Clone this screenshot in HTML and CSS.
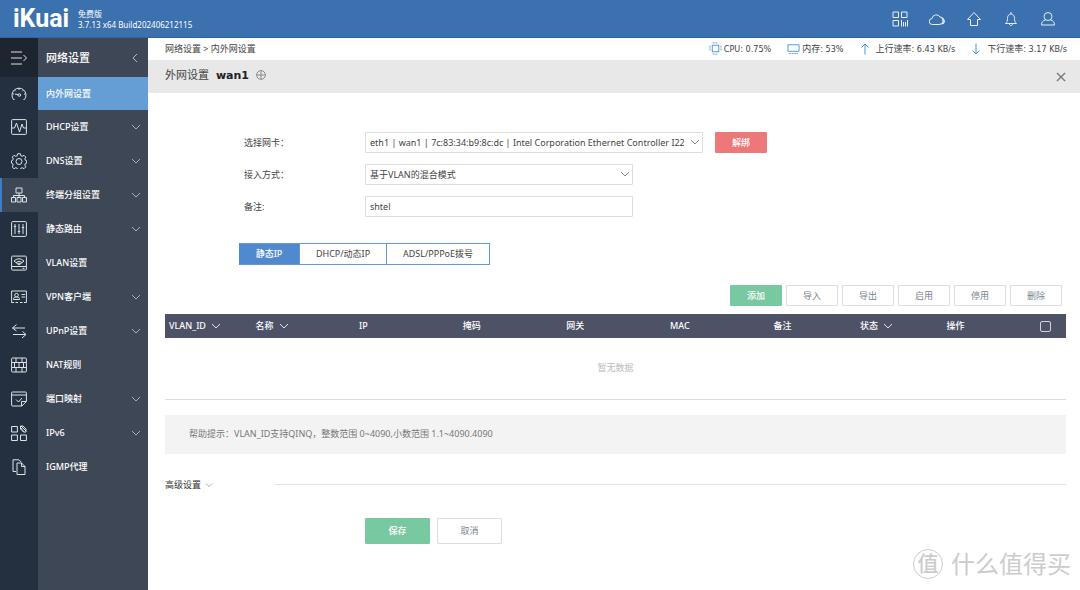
FILE: index.html
```html
<!DOCTYPE html>
<html lang="zh-CN">
<head>
<meta charset="utf-8">
<meta name="viewport" content="width=device-width, initial-scale=1">
<title>iKuai - 内外网设置</title>
<link rel="stylesheet" href="styles.css">
</head>
<body>
<svg class="defs" aria-hidden="true">
  <symbol id="down" viewBox="0 0 10 6"><path d="M1 1l4 4 4-4"/></symbol>
</svg>
<header class="header">
  <a class="logo" href="#">iKuai</a>
  <div class="version"><span>免费版</span><span>3.7.13 x64 Build202406212115</span></div>
  <nav class="tools" aria-label="工具">
    <button aria-label="应用"><svg viewBox="0 0 16 16"><path d="M1 1h5.500v5.500H1zM9.500 1H15v5.500H9.500zM1 9.500h5.500V15H1zM9.500 9v6.500M11.500 11v4.500M13.500 11v4.500M15.500 9v6.500"/></svg></button>
    <button aria-label="云"><svg viewBox="0 0 16 16"><path d="M3.500 13.500a3 3 0 0 1-.5-6 4.300 4.300 0 0 1 8-1.500 3.800 3.800 0 0 1-1 7.500zM11.500 6a3.800 3.800 0 0 1 1 7.300M13.500 7.500a3 3 0 0 1 .3 5.500"/></svg></button>
    <button aria-label="首页"><svg viewBox="0 0 16 16"><path d="M8 1.500L1.500 8.500h3V14.500h7V8.500h3z"/></svg></button>
    <button aria-label="通知"><svg viewBox="0 0 16 16"><path d="M8 1v2M2.500 12.500h11c-1.500-1.500-2-2.500-2-5C11.500 4.500 10 3 8 3S4.500 4.500 4.500 7.500c0 2.500-.5 3.500-2 5zM6.500 13c0 2 3 2 3 0"/></svg></button>
    <button aria-label="用户"><svg viewBox="0 0 16 16"><circle cx="8" cy="5.500" r="4"/><path d="M5.500 9C3 9.500 1.500 11 1.500 14h13c0-3-1.500-4.500-4-5"/></svg></button>
  </nav>
</header>
<div class="layout">
  <nav class="rail" aria-label="主菜单">
    <button class="expand" aria-label="展开"><svg viewBox="0 0 16 16"><path d="M0 2h11M0 8h11M0 14h11M12.500 5l3 3-3 3"/></svg></button>
    <button class="first" aria-label="状态"><svg viewBox="0 0 16 16"><path d="M3.500 13.500H2.500a7 7 0 1 1 11 0h-1M8 2v2M1.500 8h1.500M14.500 8H13M3.800 4.300l1 1M12.200 4.300l-1 1M4 8l3 .7"/><circle cx="8.300" cy="9" r="1.300"/></svg></button>
    <button aria-label="监控"><svg viewBox="0 0 16 16"><rect x=".6" y=".6" width="14.800" height="14.800" rx="1"/><path d="M1 9h2.500L5.500 4l3 9L11 5l1.500 4H15"/></svg></button>
    <button aria-label="系统设置"><svg viewBox="0 0 16 16"><path d="M6.700.7h2.600l.5 2 1.300.6 1.900-1 1.800 1.800-1 1.800.6 1.400 1.300.5v2.400l-1.400.5-.5 1.400 1 1.800-1.800 1.800-1.800-1-1.400.6-.5 1.300H6.700l-.5-1.300-1.400-.6-1.800 1-1.800-1.800 1-1.800-.5-1.400-1.200-.5V7.800l1.200-.5.6-1.400-1-1.800L3 2.300l1.800 1 1.400-.6z"/><circle cx="8" cy="8.500" r="3"/></svg></button>
    <button class="current" aria-label="网络设置"><svg viewBox="0 0 16 16"><path d="M5 1h6v5H5zM8 6v4.500M2.500 10.500V8.500h11v2M.5 10.500h4v4.500h-4zM6 10.500h4v4.500H6zM11.500 10.500h4v4.500h-4z"/></svg></button>
    <button aria-label="流控"><svg viewBox="0 0 16 16"><rect x=".6" y=".6" width="14.800" height="14.800" rx="1"/><path d="M4 3v10M8 3v10M12 3v10M2.800 5.500h2.400M6.800 10.500h2.400M10.800 6.500h2.400"/></svg></button>
    <button aria-label="无线"><svg viewBox="0 0 16 16"><rect x=".6" y="1.100" width="14.800" height="14" rx="1"/><path d="M1 11.500h14M3 6Q8 1.500 13 6L8 10zM5 7.500q3-2.500 6 0M6.500 8.700q1.500-1.200 3 0M11.500 13.300h2"/></svg></button>
    <button aria-label="认证"><svg viewBox="0 0 16 16"><path d="M3 13.500H.6V2h14.800v11.500H13M4.500 13.500H7M9 13.500h2.500M2.500 10.500c0-2 1-2.500 3-2.500s3 .5 3 2.500zM10.500 5.500H14M10.500 8H14"/><circle cx="5.500" cy="6.200" r="1.800"/></svg></button>
    <button aria-label="行为"><svg viewBox="0 0 16 16"><path d="M14 5H1.500l4-3.500M1.500 5l4 3M2 11.500h13l-3.500-3M15 11.500l-4 3.500"/></svg></button>
    <button aria-label="安全"><svg viewBox="0 0 16 16"><rect x=".6" y="1" width="14.800" height="14" rx="1"/><path d="M1 5.500h14M1 10.500h14M5 1v4.500M11 1v4.500M8 5.500v5M3.500 5.500v5M12.500 5.500v5M5 10.500V15M11 10.500V15"/></svg></button>
    <button aria-label="应用"><svg viewBox="0 0 16 16"><path d="M15.400 10.500V2q0-1-1-1H1.600q-1 0-1 1v12q0 1 1 1h9.300zM1 4h14M10.500 15v-4.500h4.500M5 8.500l2.500 2.500L11 7"/></svg></button>
    <button aria-label="高级应用"><svg viewBox="0 0 16 16"><path d="M.6 1.500h5.800v5.500H.6zM.6 10h5.800v5.500H.6zM9.500 10h5.900v5.500H9.500zM10 1l5 5M12 1l3 3M10 3l3 4M9.500 1v3l3 3h2.500V4l-3-3z"/></svg></button>
    <button aria-label="日志"><svg viewBox="0 0 16 16"><path d="M5 12.500H2V.8h6l2.500 2.500M6 4h4.500L14 7.500v8H6zM10.500 4v3.500H14"/></svg></button>
  </nav>
  <aside class="sidebar">
    <div class="side-title"><span>网络设置</span><button aria-label="收起"><svg viewBox="0 0 6 10"><path d="M5 1L1 5l4 4"/></svg></button></div>
    <nav class="menu" aria-label="网络设置">
      <a class="active" href="#">内外网设置</a>
      <a href="#">DHCP设置<svg class="chev"><use href="#down"/></svg></a>
      <a href="#">DNS设置<svg class="chev"><use href="#down"/></svg></a>
      <a href="#">终端分组设置<svg class="chev"><use href="#down"/></svg></a>
      <a href="#">静态路由<svg class="chev"><use href="#down"/></svg></a>
      <a href="#">VLAN设置</a>
      <a href="#">VPN客户端<svg class="chev"><use href="#down"/></svg></a>
      <a href="#">UPnP设置<svg class="chev"><use href="#down"/></svg></a>
      <a href="#">NAT规则</a>
      <a href="#">端口映射<svg class="chev"><use href="#down"/></svg></a>
      <a href="#">IPv6<svg class="chev"><use href="#down"/></svg></a>
      <a href="#">IGMP代理</a>
    </nav>
  </aside>
  <main class="main">
    <div class="topline">
      <div class="crumbs">网络设置 &gt; 内外网设置</div>
      <div class="stats">
        <span><svg class="stat-icon" viewBox="0 0 14 14"><rect x="3.500" y="3.500" width="7" height="7"/><path d="M4 1h6M4 13h6M1 4v6M13 4v6" stroke-dasharray="2 1"/></svg>CPU: 0.75%</span>
        <span><svg class="stat-icon" viewBox="0 0 14 14"><path d="M1 3h12v7H1z"/><path d="M2 12.500h10" stroke-dasharray="2 1"/></svg>内存: 53%</span>
        <span class="rate"><svg class="arrow" viewBox="0 0 10 12"><path d="M5 11.500V1M1.500 4.500L5 1l3.500 3.500"/></svg>上行速率: 6.43 KB/s</span>
        <span class="rate"><svg class="arrow" viewBox="0 0 10 12"><path d="M5 .5V11M1.500 7.500L5 11l3.500-3.500"/></svg>下行速率: 3.17 KB/s</span>
      </div>
    </div>
    <div class="titlebar">
      <h1>外网设置 <b>wan1</b></h1>
      <button class="plus" aria-label="添加网口"><svg viewBox="0 0 10 10"><circle cx="5" cy="5" r="4.400"/><path d="M5 1v8M1 5h8"/></svg></button>
      <button class="close" aria-label="关闭"><svg viewBox="0 0 10 10"><path d="M1 1l8 8M9 1L1 9"/></svg></button>
    </div>
    <form class="content">
      <div class="fields">
        <label for="nic">选择网卡：</label>
        <div class="control">
          <div class="pick wide"><select id="nic"><option>eth1 | wan1 | 7c:83:34:b9:8c:dc | Intel Corporation Ethernet Controller I22</option></select><svg class="chev"><use href="#down"/></svg></div>
          <button type="button" class="btn danger">解绑</button>
        </div>
        <label for="mode">接入方式：</label>
        <div class="pick"><select id="mode"><option>基于VLAN的混合模式</option></select><svg class="chev"><use href="#down"/></svg></div>
        <label for="note">备注:</label>
        <input class="text" id="note" type="text" value="shtel">
      </div>
      <div class="tabs" role="tablist">
        <button type="button" role="tab" aria-selected="true" class="tab static on">静态IP</button>
        <button type="button" role="tab" aria-selected="false" class="tab dhcp">DHCP/动态IP</button>
        <button type="button" role="tab" aria-selected="false" class="tab adsl">ADSL/PPPoE拨号</button>
      </div>
      <div class="actions">
        <button type="button" class="btn primary">添加</button>
        <button type="button" class="btn">导入</button>
        <button type="button" class="btn">导出</button>
        <button type="button" class="btn">启用</button>
        <button type="button" class="btn">停用</button>
        <button type="button" class="btn">删除</button>
      </div>
      <table class="grid">
        <thead><tr>
          <th class="c-s">VLAN_ID<svg class="chev"><use href="#down"/></svg></th>
          <th class="c-m">名称<svg class="chev"><use href="#down"/></svg></th>
          <th class="c-m">IP</th>
          <th class="c-m">掩码</th>
          <th class="c-m">网关</th>
          <th class="c-m">MAC</th>
          <th class="c-s">备注</th>
          <th class="c-s">状态<svg class="chev"><use href="#down"/></svg></th>
          <th>操作</th>
          <th class="c-check"><input type="checkbox" aria-label="全选"></th>
        </tr></thead>
        <tbody><tr><td colspan="10">暂无数据</td></tr></tbody>
      </table>
      <p class="help">帮助提示：VLAN_ID支持QINQ，整数范围 0~4090,小数范围 1.1~4090.4090</p>
      <div class="advanced"><button type="button">高级设置<svg class="chev"><use href="#down"/></svg></button><hr></div>
      <div class="submit">
        <button type="button" class="btn primary">保存</button>
        <button type="button" class="btn">取消</button>
      </div>
    </form>
  </main>
</div>
<div class="watermark"><span class="mark">值</span><span>什么值得买</span></div>
</body>
</html>
```
FILE: styles.css
```css
* { box-sizing: border-box; }
body {
  margin: 0;
  min-height: 100vh;
  display: flex;
  flex-direction: column;
  position: relative;
  background: #fff;
  color: #444;
  font: 9px/14px "Noto Sans", "Noto Sans CJK SC", sans-serif;
}
button, input, select { font: inherit; color: inherit; margin: 0; }
button { padding: 0; border: 0; background: none; cursor: pointer; }
a { color: inherit; text-decoration: none; }
svg { fill: none; stroke: currentColor; stroke-width: 1; display: block; flex: none; }
.defs { position: absolute; width: 0; height: 0; }
.chev { width: 10px; height: 6px; }

.header {
  height: 38px;
  display: flex;
  align-items: center;
  padding: 0 24px 0 13px;
  background: #3a71ae;
  border-bottom: 1px solid #3265a0;
  color: #fff;
}
.logo { font: 700 25px/36px Roboto, sans-serif; width: 65px; }
.version { display: flex; flex-direction: column; font: 400 8px/11px "Noto Sans", "Noto Sans CJK SC", sans-serif; }
.tools { margin-left: auto; display: flex; gap: 21px; }
.tools svg { width: 16px; height: 16px; color: #e6eef7; }

.layout { flex: 1; display: flex; }
.rail { width: 38px; flex: none; background: #243040; color: #dfe3e8; }
.rail button { width: 100%; height: 34px; display: flex; align-items: center; justify-content: center; }
.rail svg { width: 16px; height: 16px; }
.rail .expand { height: 39px; background: #1c2530; }
.rail .first { height: 33px; }
.rail .current { background: #3e4756; border-left: 2px solid #3e7fc4; padding-right: 2px; }

.sidebar { width: 110px; flex: none; background: #3e4756; color: #fff; font-weight: 500; }
.side-title { height: 39px; padding: 0 10px 0 8px; display: flex; align-items: center; justify-content: space-between; font-size: 11px; }
.side-title svg { width: 6px; height: 10px; color: #b4b9c1; }
.menu a { height: 34px; padding: 0 7px 0 8px; display: flex; align-items: center; justify-content: space-between; }
.menu .active { height: 33px; background: #659dd5; }
.menu .chev { color: #aab0b9; }

.main { flex: 1; min-width: 0; }
.topline { height: 22px; padding: 0 13px 1px 17px; display: flex; align-items: center; justify-content: space-between; }
.stats { display: flex; gap: 16px; font-family: "DejaVu Sans Condensed", "Noto Sans CJK SC", sans-serif; }
.stats span { display: flex; align-items: center; gap: 2px; white-space: nowrap; }
.stats svg { color: #4a94dc; }
.stat-icon { width: 13px; height: 13px; }
.stats .rate { gap: 6px; }
.arrow { width: 10px; height: 12px; }
.titlebar { height: 33px; padding: 0 14px 3px 17px; display: flex; align-items: center; background: #e8e8e8; }
h1 { margin: 0; font-size: 11px; font-weight: 400; }
h1 b { margin-left: 4px; font-family: "DejaVu Sans", sans-serif; color: #222; }
.plus { margin-left: 7px; color: #888; }
.plus svg { width: 10px; height: 10px; }
.close { margin: 3px 0 0 auto; color: #777; }
.close svg { width: 10px; height: 10px; }
.close path { stroke-width: 1.4; }

.content { padding: 39px 14px 0 17px; }
.fields { padding-left: 79px; display: grid; grid-template-columns: 121px 1fr; row-gap: 11px; align-items: center; }
.control { display: flex; gap: 12px; }
.pick { position: relative; width: 268px; }
.pick.wide { width: 338px; }
.pick select, .text { width: 100%; height: 21px; padding: 0 18px 0 4px; border: 1px solid #ddd; border-radius: 1px; background: #fff; appearance: none; color: #444; }
.text { width: 268px; }
.pick .chev { position: absolute; right: 3px; top: 7px; color: #888; pointer-events: none; }
.btn { width: 52px; height: 21px; border: 1px solid #ddd; border-radius: 1px; background: #fff; color: #7b8590; }
.danger { background: #ee7777; border-color: #ee7777; color: #fff; font-weight: 500; }
.primary { background: #78c8a2; border-color: #78c8a2; color: #fff; font-weight: 500; }

.tabs { display: flex; margin: 26px 0 0 74px; }
.tab { height: 22px; border: 1px solid #6199d6; border-left-width: 0; background: #fff; }
.tab.static { width: 61px; }
.tab.dhcp { width: 87px; }
.tab.adsl { width: 103px; }
.tab.on { background: #5089ce; color: #fff; font-weight: 500; }
.actions { display: flex; justify-content: flex-end; gap: 4px; margin: 20px 4px 8px 0; }

.grid { width: 100%; border-collapse: collapse; table-layout: fixed; }
.grid th { height: 24px; padding: 0 4px; background: #4e5266; color: #fff; font-weight: 500; text-align: left; }
.grid th .chev { display: inline-block; margin-left: 5px; color: #e4e5e9; }
.grid .c-s { width: 9.6%; }
.grid .c-m { width: 11.5%; }
.grid .c-check { width: 30px; }
.grid input { appearance: none; display: block; width: 11px; height: 11px; border: 1px solid #d0d2d8; border-radius: 2px; }
.grid td { height: 61px; padding: 0; text-align: center; color: #bbb; border-bottom: 1px solid #ddd; }
.help { margin: 15px 0 0; padding: 12px 24px 13px; background: #f3f3f3; color: #777; }
.advanced { display: flex; align-items: center; margin-top: 24px; color: #333; }
.advanced button { width: 110px; display: flex; align-items: center; gap: 4px; }
.advanced .chev { width: 8px; color: #999; }
.advanced hr { flex: 1; margin: 0; border: 0; border-top: 1px solid #e6e6e6; }
.submit { display: flex; gap: 7px; margin: 26px 0 46px 200px; }
.submit .btn { width: 65px; height: 26px; }

.watermark { position: absolute; right: 9px; bottom: 9px; display: flex; align-items: center; gap: 8px; font-size: 24px; line-height: 34px; color: #ccc; pointer-events: none; }
.mark { width: 30px; height: 30px; border: 1px solid #ccc; border-radius: 50%; font-size: 21px; line-height: 26px; text-align: center; font-weight: 500; }
```
